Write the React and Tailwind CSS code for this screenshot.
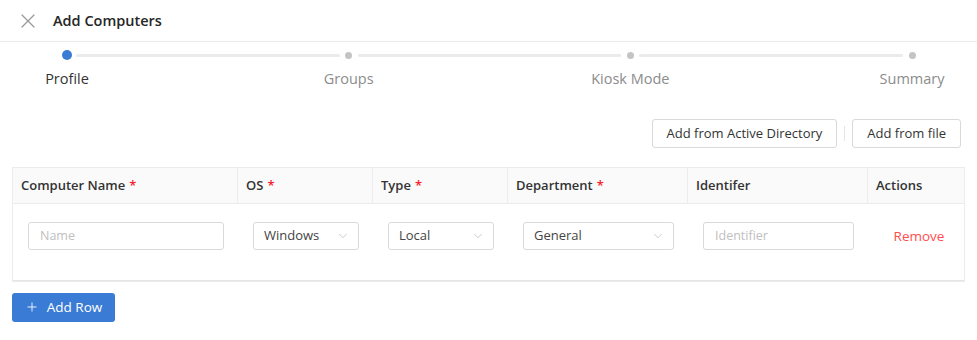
import { X, ChevronDown, Plus } from "lucide-react";

const steps = ["Profile", "Groups", "Kiosk Mode", "Summary"];

const columns = [
  { label: "Computer Name", required: true },
  { label: "OS", required: true },
  { label: "Type", required: true },
  { label: "Department", required: true },
  { label: "Identifer", required: false },
  { label: "Actions", required: false },
];

const Select = ({ value }) => (
  <div className="flex items-center justify-between h-[28px] w-full border border-[#d9d9d9] rounded-[3px] pl-[10px] pr-[8px] bg-white">
    <span className="text-[13px] text-[#444]">{value}</span>
    <ChevronDown className="w-[14px] h-[14px] text-[#bbb]" strokeWidth={1.25} />
  </div>
);

const Input = ({ placeholder }) => (
  <input
    type="text"
    placeholder={placeholder}
    className="h-[28px] w-full border border-[#d9d9d9] rounded-[3px] px-[11px] text-[12.5px] text-[#444] placeholder-[#c0c0c0] focus:outline-none"
  />
);

export default function App() {
  return (
    <div className="w-[977px] h-[340px] bg-white font-['Open_Sans',sans-serif] text-[#333] overflow-hidden">
      {/* Header */}
      <div className="flex items-center h-[42px] border-b border-[#ececec] pl-[16px]">
        <X className="w-[24px] h-[24px] text-[#999]" strokeWidth={1.25} />
        <span className="ml-[13px] text-[14.5px] font-semibold text-[#262626]">Add Computers</span>
      </div>

      {/* Steps */}
      <div className="flex items-start pl-[67px] pr-[65px] pt-[8px]">
        {steps.map((s, i) => (
          <div key={s} className="contents">
            <div className="flex flex-col items-center w-0">
              <div className="h-[10px] flex items-center">
                {i === 0 ? (
                  <span className="block w-[10px] h-[10px] rounded-full bg-[#3a7bd5] shrink-0" />
                ) : (
                  <span className="block w-[7px] h-[7px] rounded-full bg-[#c4c4c4] shrink-0" />
                )}
              </div>
              <span
                className={`mt-[8px] whitespace-nowrap text-[14.5px] ${
                  i === 0 ? "text-[#333]" : "text-[#8c8c8c]"
                }`}
              >
                {s}
              </span>
            </div>
            {i < steps.length - 1 && (
              <div className="flex-1 h-[10px] flex items-center mx-[9px]">
                <div className="w-full h-[3px] bg-[#ebebeb] rounded-full" />
              </div>
            )}
          </div>
        ))}
      </div>

      {/* Toolbar */}
      <div className="flex items-center justify-end pr-[16px] mt-[29px]">
        <button className="h-[29px] px-[14px] border border-[#d9d9d9] rounded-[3px] text-[13px] text-[#333] bg-white">
          Add from Active Directory
        </button>
        <span className="w-px h-[15px] bg-[#e5e5e5] mx-[7px]" />
        <button className="h-[29px] px-[14px] border border-[#d9d9d9] rounded-[3px] text-[13px] text-[#333] bg-white">
          Add from file
        </button>
      </div>

      {/* Table */}
      <div className="mx-[12px] mt-[19px] w-[953px] border border-[#ececec]">
        <div className="grid grid-cols-[225px_135px_135px_180px_180px_1fr] bg-[#fafafa] border-b border-[#ececec] h-[36px]">
          {columns.map((c, i) => (
            <div
              key={c.label}
              className={`flex items-center px-[8px] text-[13px] font-semibold text-[#333] ${
                i < columns.length - 1 ? "border-r border-[#ececec]" : ""
              }`}
            >
              {c.label}
              {c.required && <span className="ml-[4px] text-[#f5222d]">*</span>}
            </div>
          ))}
        </div>
        <div className="grid grid-cols-[225px_135px_135px_180px_180px_1fr] h-[77px] border-b border-[#e5e5e5]">
          <div className="pl-[15px] pr-[14px] pt-[18px]">
            <Input placeholder="Name" />
          </div>
          <div className="pl-[15px] pr-[14px] pt-[18px]">
            <Select value="Windows" />
          </div>
          <div className="pl-[15px] pr-[14px] pt-[18px]">
            <Select value="Local" />
          </div>
          <div className="pl-[15px] pr-[14px] pt-[18px]">
            <Select value="General" />
          </div>
          <div className="pl-[15px] pr-[14px] pt-[18px]">
            <Input placeholder="Identifier" />
          </div>
          <div className="pt-[18px] flex justify-center">
            <span className="h-[28px] flex items-center pl-[6px] text-[13.5px] text-[#ff4d4f]">Remove</span>
          </div>
        </div>
      </div>

      {/* Add row */}
      <div className="px-[12px] mt-[11px]">
        <button className="h-[29px] w-[103px] flex items-center justify-center gap-[8px] rounded-[3px] bg-[#3a7bd5] text-white text-[13.5px]">
          <Plus className="w-[14px] h-[14px]" strokeWidth={1.5} />
          Add Row
        </button>
      </div>
    </div>
  );
}
